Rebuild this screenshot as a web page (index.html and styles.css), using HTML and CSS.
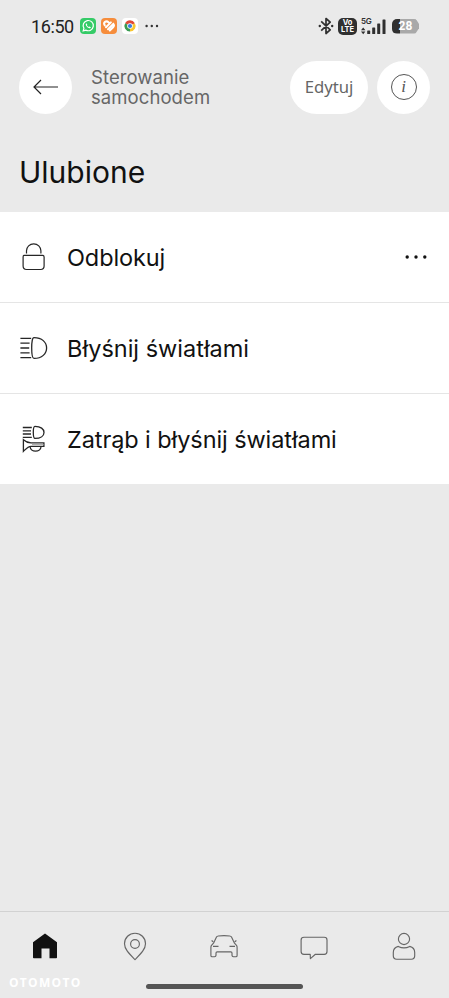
FILE: index.html
```html
<!DOCTYPE html>
<html lang="pl">
<head>
<meta charset="utf-8">
<meta name="viewport" content="width=device-width, initial-scale=1">
<title>Sterowanie samochodem</title>
<link rel="stylesheet" href="styles.css">
</head>
<body>
<div class="status">
  <span class="time">16:50</span>
  <svg class="app" width="16" height="16" viewBox="0 0 16 16"><rect width="16" height="16" rx="4" fill="#35cb67"/><path d="M3.2 12.8l.7-2.500A5.100 5.100 0 1 1 5.800 12.100z" fill="none" stroke="#fff" stroke-width="1.200"/><path d="M6.300 5.300q-1 .7-.3 2.100 1.100 2.200 3.200 2.900 1.400.2 1.700-1l-1.400-.8-.8.6q-1.200-.5-1.800-1.800l.4-.7z" fill="#fff"/></svg>
  <svg class="app" width="16" height="16" viewBox="0 0 16 16"><rect width="16" height="16" rx="4" fill="#f68d3c"/><path d="M3.800 7.400Q2.300 5.200 4 3.900t3.800.5M5 9.300l4.900-4.900M7 11.300l5.300-5.300q1.400 1.700-.2 3.300L8.800 12.500" fill="none" stroke="#fff" stroke-width="2" stroke-linecap="round"/></svg>
  <svg class="app" width="16" height="16" viewBox="0 0 16 16"><rect width="16" height="16" rx="4" fill="#fff"/><path d="M8 8L3.100 5.200A5.600 5.600 0 0 1 12.900 5.200z" fill="#df4936"/><path d="M8 8l4.900-2.800A5.600 5.600 0 0 1 8 13.600z" fill="#f8c62f"/><path d="M8 8v5.600A5.600 5.600 0 0 1 3.100 5.200z" fill="#3a9b50"/><circle cx="8" cy="8" r="2.800" fill="#fff"/><circle cx="8" cy="8" r="2.100" fill="#397de2"/></svg>
  <svg class="dots" width="14" height="4" viewBox="0 0 14 4" fill="#333"><circle cx="1.600" cy="2" r="1.200"/><circle cx="6.800" cy="2" r="1.200"/><circle cx="12" cy="2" r="1.200"/></svg>
  <span class="spacer"></span>
  <svg width="16" height="18" viewBox="0 0 16 18"><path d="M3.200 4.400l9 8.500L8 16.500v-15l4.200 3.600-9 8.500" fill="none" stroke="#303030" stroke-width="1.700" stroke-linejoin="round"/><circle cx="1.800" cy="9" r="1.200" fill="#303030"/><circle cx="14.200" cy="9" r="1.200" fill="#303030"/></svg>
  <span class="volte"><span>Vo</span><span>LTE</span></span>
  <span class="network"><span class="gen">5G</span>
    <svg width="25" height="17" viewBox="0 0 25 17" fill="#303030"><path d="M0 12.200l2.200-2.800 2.200 2.800zM0 13.500h4.400l-2.200 2.800z"/><rect x="6.200" y="12.500" width="3" height="3.500" rx=".6"/><rect x="11.200" y="9.500" width="3" height="6.500" rx=".6"/><rect x="16.200" y="5.500" width="3" height="10.500" rx=".6"/><rect x="21.500" y="1.500" width="3" height="14.500" rx=".6"/></svg>
  </span>
  <span class="battery"><span>28</span></span>
</div>

<header class="header">
  <button class="round" aria-label="Wstecz"><svg width="25" height="16" viewBox="0 0 25 16" fill="none" stroke="#222" stroke-width="1.200"><path d="M25 8H1.200M8 1L1 8l7 7"/></svg></button>
  <div class="subtitle"><span>Sterowanie</span><span>samochodem</span></div>
  <button class="edit">Edytuj</button>
  <button class="round" aria-label="Informacje"><span class="info">i</span></button>
</header>

<h1>Ulubione</h1>

<main class="list">
  <div class="row">
    <svg width="28" height="28" viewBox="0 0 28 28" fill="none" stroke="#262626" stroke-width="1.200"><path d="M3.600 12.400h19c1 0 1.500.5 1.500 1.500v9.200c0 2.300-1 3.400-3.400 3.400H6.500c-2.400 0-3.400-1.100-3.400-3.400v-9.200c0-1 .2-1.500 1-1.500zM6.500 10.600V7.800a7.200 7 0 0 1 14.400 0v2.800"/></svg>
    <span class="label unlock">Odblokuj</span>
    <svg class="more" width="22" height="4" viewBox="0 0 22 4" fill="#111"><circle cx="2.200" cy="2" r="1.700"/><circle cx="11" cy="2" r="1.700"/><circle cx="19.800" cy="2" r="1.700"/></svg>
  </div>
  <div class="row">
    <svg width="28" height="28" viewBox="0 0 28 28" fill="none" stroke="#262626" stroke-width="1.300"><path d="M.4 4.300h10.800M.4 9.200h9.200M.4 14h8.800M.4 18.800h9.200M.4 23.700h10.800M14 3.600c7.900 0 12.600 4.600 12.600 10.400S21.900 24.400 14 24.400c-1.600 0-2.300-3.800-2.300-10.400S12.400 3.600 14 3.600z"/></svg>
    <span class="label flash">Błyśnij światłami</span>
  </div>
  <div class="row">
    <svg width="28" height="28" viewBox="0 0 28 28" fill="none" stroke="#262626" stroke-width="1.300"><path d="M2.800 2.500h9M2.800 5.800h8.200M2.800 9h8.200M2.800 12.300h9M15 1.400c5.700 0 9 2.600 9 6s-3.300 6-9 6c-1.100 0-1.700-2.300-1.700-6s.6-6 1.700-6z"/><path d="M3.400 14.800c2.200 2 4.400 3.100 7.600 3.100h12.900v3.400H11c-3 0-4.200 1.600-7.600 5.100z"/><path d="M10 21.300c.3 6.400 10.800 6.400 11.100 0"/><path d="M12 19.600h11.500" stroke="#a5a5a5" stroke-width="1"/></svg>
    <span class="label horn">Zatrąb i błyśnij światłami</span>
  </div>
</main>

<nav class="tabs">
  <a><svg width="30" height="30" viewBox="0 0 30 30"><path d="M15 2.500l12 8.700v15.300q0 .8-.8.800h-6.700V17.500h-8v9.800H3.800q-.8 0-.8-.8V11.200z" fill="#111"/></svg></a>
  <a><svg width="30" height="30" viewBox="0 0 30 30"><path d="M15 28.600C9.200 22.700 4.500 18.200 4.500 12.700a10.500 10.500 0 0 1 21 0c0 5.500-4.700 10-10.500 15.900z"/><circle cx="15" cy="13" r="4.400"/></svg></a>
  <a><svg width="30" height="30" viewBox="0 0 30 30"><path d="M4.500 12.200L7.500 6q.5-.9 1.600-1Q15 4.300 20.900 5q1.100.1 1.600 1l3 6.200 2 2.200q.6.800.6 2v8q0 1.300-1.200 1.300h-2.500q-1.300 0-1.400-1.300v-2.400q0-1.200-1.200-1.200H8.200q-1.200 0-1.200 1.200v2.400q-.1 1.300-1.400 1.300H3.100q-1.200 0-1.200-1.300v-8q0-1.200.6-2zM4.200 10.800l-1.600-1.300M25.800 10.800l1.600-1.300M4 15.400h5.500M26 15.400h-5.500"/></svg></a>
  <a><svg width="30" height="30" viewBox="0 0 30 30"><path d="M5 6.200h20.200c2 0 2.800.8 2.800 2.700v11.500c0 2-.8 2.900-2.800 2.900h-8.800l-5 4.300-.2-4.300H5c-2 0-2.900-.9-2.900-2.900V8.900C2.100 7 3 6.200 5 6.200z"/></svg></a>
  <a><svg width="30" height="30" viewBox="0 0 30 30"><circle cx="15" cy="8" r="5.600"/><path d="M9.300 15.400q5.700 3 11.400 0c3.400.9 5 3 5 6v3.400c0 2.400-1 3.400-3.400 3.400H7.700c-2.400 0-3.400-1-3.400-3.400v-3.400c0-3 1.600-5.100 5-6z"/></svg></a>
</nav>
<footer class="bottom"><span class="mark">OTOMOTO</span><span class="handle"></span></footer>
</body>
</html>
```

FILE: styles.css
```css
* { box-sizing: border-box; }
body {
  margin: 0;
  height: 998px;
  display: flex;
  flex-direction: column;
  overflow: hidden;
  background: #eaeaea;
  color: #111;
  font-family: Inter, "Liberation Sans", sans-serif;
}
button { border: 0; padding: 0; background: #fff; font: inherit; }
svg { flex: none; display: block; }

.status { height: 52px; padding: 0 30px 0 31px; display: flex; align-items: center; flex: none; }
.time { width: 43px; margin-right: 6px; padding-top: 1px; font: 400 18px/20px Roboto, sans-serif; letter-spacing: -0.4px; color: #222; }
.app { margin-right: 5px; }
.dots { margin-left: 2px; }
.spacer { flex: 1; }
.volte { width: 19px; height: 17px; margin-left: 4px; border-radius: 5px; background: #303030; color: #fff; font: 700 7.5px/7px Inter, sans-serif; display: flex; flex-direction: column; align-items: center; justify-content: center; }
.network { display: grid; margin-left: 4px; width: 25px; }
.network > * { grid-area: 1 / 1; }
.gen { margin-top: -1px; font: 600 8px/8px Inter, sans-serif; letter-spacing: -0.3px; color: #303030; }
.battery { width: 27px; height: 15px; margin-left: 6px; border-radius: 5px; background: linear-gradient(90deg, #303030 0 8px, #a9a9a9 8px); clip-path: polygon(0 0, 87% 0, 100% 35%, 100% 65%, 87% 100%, 0 100%); color: #fff; font: 700 12px/15px Roboto, sans-serif; text-align: center; }

.header { display: flex; align-items: center; height: 70px; padding: 0 19px; flex: none; }
.round { width: 53px; height: 53px; border-radius: 50%; display: flex; align-items: center; justify-content: center; flex: none; }
.subtitle { flex: 1; display: flex; flex-direction: column; margin-left: 19px; padding-top: 1px; font-size: 18.5px; line-height: 19.5px; letter-spacing: 0.08px; color: #666; }
.edit { width: 78px; height: 53px; margin-right: 9px; border-radius: 27px; color: #666; font: 400 16.7px/24px "Noto Sans", sans-serif; }
.info { width: 26px; height: 26px; border: 1px solid #555; border-radius: 50%; font: italic 17px/23px "Liberation Serif", serif; color: #555; text-align: center; }

h1 { height: 90px; margin: 0; padding: 30px 19px 0; font-size: 30px; line-height: 40px; font-weight: 400; flex: none; }

.list { background: #fff; flex: none; }
.row { height: 91px; padding: 0 22px 0 20px; display: flex; align-items: center; border-bottom: 1px solid #e5e5e5; }
.row:last-child { border-bottom: 0; height: 90px; }
.label { flex: 1; margin-left: 19px; padding-top: 1px; font-size: 23.5px; line-height: 32px; white-space: nowrap; }
.unlock { letter-spacing: -0.1px; }
.horn { letter-spacing: -0.09px; }

.tabs { height: 69px; margin-top: auto; border-top: 1px solid #d2d2d2; display: grid; grid-template-columns: repeat(5, 1fr); align-items: center; justify-items: center; flex: none; }
.tabs svg { margin-top: -1px; fill: none; stroke: #666; stroke-width: 1.15; stroke-linejoin: round; }
.tabs a:first-child svg { stroke: none; }
.bottom { height: 18px; padding-left: 9px; display: flex; align-items: flex-start; flex: none; }
.mark { width: 137px; margin-top: -5px; font: 700 12px/16px "Open Sans", sans-serif; letter-spacing: 1.3px; color: #fff; }
.handle { width: 157px; height: 5px; margin-top: 4px; border-radius: 3px; background: #555; }
```
